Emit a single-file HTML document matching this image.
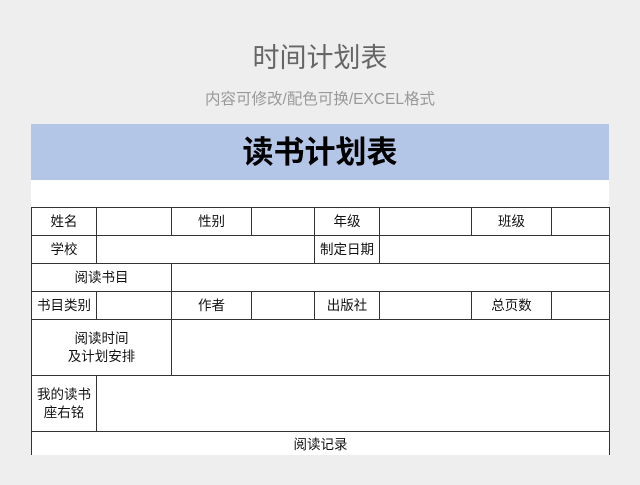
<!DOCTYPE html><html><head><style>
body{margin:0;width:640px;height:485px;background:#eeeeee;position:relative;overflow:hidden;font-family:"Liberation Sans","Noto Sans CJK SC",sans-serif}
.t{position:absolute;left:0;width:640px;text-align:center}
.c{position:absolute;border:1px solid #333;box-sizing:border-box;display:flex;align-items:center;justify-content:center;text-align:center;font-size:13.5px;color:#111;line-height:18px;background:#fff}
</style></head><body>
<div class="t" style="top:36px;font-size:27px;color:#666">时间计划表</div>
<div class="t" style="top:87px;font-size:15.5px;color:#999">内容可修改/配色可换/EXCEL格式</div>
<div style="position:absolute;left:31px;top:124px;width:578px;height:56px;background:#b4c6e7;text-align:center;font-size:31px;font-weight:bold;line-height:58px;color:#000">读书计划表</div>
<div style="position:absolute;left:31px;top:180px;width:578px;height:275px;background:#fff"></div>
<div id="g"></div>
<script>
const X=[31,96,171,251,314,379,471,551,609],Y=[207,235,263,291,319,375,431,460];
const cells=[
[0,0,1,1,"姓名"],[0,1,2,1,""],[0,2,3,1,"性别"],[0,3,4,1,""],[0,4,5,1,"年级"],[0,5,6,1,""],[0,6,7,1,"班级"],[0,7,8,1,""],
[1,0,1,1,"学校"],[1,1,4,1,""],[1,4,5,1,"制定日期"],[1,5,8,1,""],
[2,0,2,1,"阅读书目"],[2,2,8,1,""],
[3,0,1,1,"书目类别"],[3,1,2,1,""],[3,2,3,1,"作者"],[3,3,4,1,""],[3,4,5,1,"出版社"],[3,5,6,1,""],[3,6,7,1,"总页数"],[3,7,8,1,""],
[4,0,2,1,"阅读时间<br>及计划安排"],[4,2,8,1,""],
[5,0,1,1,"我的读书<br>座右铭"],[5,1,8,1,""]];
let h="";
for(const[r,a,b,s,t]of cells){h+=`<div class="c" style="left:${X[a]}px;top:${Y[r]}px;width:${X[b]-X[a]+1}px;height:${Y[r+1]-Y[r]+1}px">${t}</div>`}
document.getElementById("g").innerHTML=h;
</script>
<div style="position:absolute;left:0;top:455px;width:640px;height:30px;background:#eeeeee"></div>
<div style="position:absolute;left:31px;top:431px;width:579px;height:24px;border-left:1px solid #333;border-right:1px solid #333;border-top:1px solid #333;box-sizing:border-box;background:#fff;text-align:center;font-size:13.5px;line-height:26px;color:#111">阅读记录</div>
</body></html>
